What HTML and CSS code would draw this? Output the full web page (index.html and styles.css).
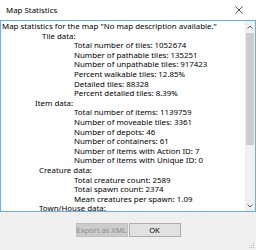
FILE: index.html
```html
<!DOCTYPE html>
<html lang="en">
<head>
    <meta charset="UTF-8">
    <meta name="viewport" content="width=device-width, initial-scale=1.0">
    <title>Map Statistics</title>
    <link rel="stylesheet" href="styles.css">
</head>
<body>
    <div class="dialog">
        <div class="title-bar">
            <span class="title">Map Statistics</span>
            <span class="close">
                <svg width="8" height="8" viewBox="0 0 8 8"><path d="M0.5 0.5 L7.5 7.5 M7.5 0.5 L0.5 7.5" stroke="#222" stroke-width="0.8" fill="none"/></svg>
            </span>
        </div>
        <div class="stats-box">
            <div class="stats-text">
                <div class="line">Map statistics for the map "No map description available."</div>
                <div class="line head tile">Tile data:</div>
                <div class="line item">Total number of tiles: 1052674</div>
                <div class="line item">Number of pathable tiles: 135251</div>
                <div class="line item">Number of unpathable tiles: 917423</div>
                <div class="line item">Percent walkable tiles: 12.85%</div>
                <div class="line item">Detailed tiles: 88328</div>
                <div class="line item">Percent detailed tiles: 8.39%</div>
                <div class="line head items">Item data:</div>
                <div class="line item">Total number of items: 1139759</div>
                <div class="line item">Number of moveable tiles: 3361</div>
                <div class="line item">Number of depots: 46</div>
                <div class="line item">Number of containers: 61</div>
                <div class="line item">Number of items with Action ID: 7</div>
                <div class="line item">Number of items with Unique ID: 0</div>
                <div class="line head creatures">Creature data:</div>
                <div class="line item">Total creature count: 2589</div>
                <div class="line item">Total spawn count: 2374</div>
                <div class="line item">Mean creatures per spawn: 1.09</div>
                <div class="line head creatures">Town/House data:</div>
            </div>
            <div class="scrollbar">
                <div class="arrow">
                    <svg width="6" height="4" viewBox="0 0 6 4"><path d="M0.5 3.5 L3 1 L5.5 3.5" stroke="#606060" stroke-width="1" fill="none"/></svg>
                </div>
                <div class="track">
                    <div class="thumb"></div>
                </div>
                <div class="arrow">
                    <svg width="6" height="4" viewBox="0 0 6 4"><path d="M0.5 0.5 L3 3 L5.5 0.5" stroke="#606060" stroke-width="1" fill="none"/></svg>
                </div>
            </div>
        </div>
        <div class="footer">
            <button class="btn" disabled>Export as XML</button>
            <button class="btn">OK</button>
            <span class="grip">
                <svg width="6" height="6" viewBox="0 0 6 6" fill="#b0b0b0"><rect x="4" y="0" width="1" height="1"/><rect x="2" y="2" width="1" height="1"/><rect x="4" y="2" width="1" height="1"/><rect x="0" y="4" width="1" height="1"/><rect x="2" y="4" width="1" height="1"/><rect x="4" y="4" width="1" height="1"/></svg>
            </span>
        </div>
    </div>
</body>
</html>
```

FILE: styles.css
```css
body {
    margin: 0;
    font-family: "Noto Sans", "Open Sans", sans-serif;
    background: #f0f0f0;
    overflow: hidden;
}

.dialog {
    width: 256px;
    height: 250px;
    display: flex;
    flex-direction: column;
    position: relative;
}

.title-bar {
    height: 20px;
    background: #ffffff;
    display: flex;
    justify-content: space-between;
    align-items: center;
    padding: 0 13px 0 6px;
    font-size: 7.9px;
    color: #000;
}

.close {
    display: flex;
}

.stats-box {
    height: 190px;
    border: 1px solid #6aaee8;
    background: #ffffff;
    display: flex;
    overflow: hidden;
}

.stats-text {
    flex: 1;
    overflow: hidden;
    padding: 1px 0 0 1px;
    font-size: 7.9px;
    line-height: 9.6px;
    color: #000;
    white-space: nowrap;
}

.head.tile {
    padding-left: 40px;
}

.head.items {
    padding-left: 33px;
}

.head.creatures {
    padding-left: 37px;
}

.item {
    padding-left: 72px;
}

.scrollbar {
    width: 10px;
    background: #f0f0f0;
    display: flex;
    flex-direction: column;
}

.arrow {
    height: 11px;
    display: flex;
    justify-content: center;
    align-items: center;
}

.track {
    flex: 1;
    padding-top: 1px;
}

.thumb {
    height: 112px;
    margin: 0 1px;
    background: #cdcdcd;
}

.footer {
    flex: 1;
    display: flex;
    justify-content: center;
    align-items: flex-start;
    padding-top: 11px;
    gap: 1px;
}

.btn {
    width: 52px;
    height: 14px;
    padding: 0;
    font-family: "Noto Sans", "Open Sans", sans-serif;
    font-size: 7.5px;
    white-space: nowrap;
    background: #e1e1e1;
    border: 1px solid #adadad;
    color: #000;
}

.btn:disabled {
    background: #cccccc;
    border-color: #bfbfbf;
    color: #8b8b8b;
}

.grip {
    position: absolute;
    right: 1px;
    bottom: 1px;
    display: flex;
}
```
